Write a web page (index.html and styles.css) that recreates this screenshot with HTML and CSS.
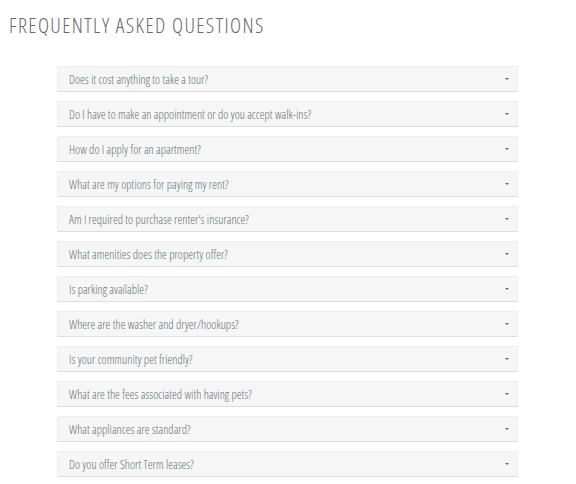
FILE: index.html
```html
<!doctype html>
<html lang="en">
<head>
    <meta charset="UTF-8">
    <title>FAQ</title>
    <link rel="stylesheet" href="styles.css">
</head>
<body>
    <h1 class="faq-title">FREQUENTLY ASKED QUESTIONS</h1>
    <div class="faq-list">
      <div class="faq-item"><span>Does it cost anything to take a tour?</span><i class="caret"></i></div>
      <div class="faq-item"><span>Do I have to make an appointment or do you accept walk-ins?</span><i class="caret"></i></div>
      <div class="faq-item"><span>How do I apply for an apartment?</span><i class="caret"></i></div>
      <div class="faq-item"><span>What are my options for paying my rent?</span><i class="caret"></i></div>
      <div class="faq-item"><span>Am I required to purchase renter's insurance?</span><i class="caret"></i></div>
      <div class="faq-item"><span>What amenities does the property offer?</span><i class="caret"></i></div>
      <div class="faq-item"><span>Is parking available?</span><i class="caret"></i></div>
      <div class="faq-item"><span>Where are the washer and dryer/hookups?</span><i class="caret"></i></div>
      <div class="faq-item"><span>Is your community pet friendly?</span><i class="caret"></i></div>
      <div class="faq-item"><span>What are the fees associated with having pets?</span><i class="caret"></i></div>
      <div class="faq-item"><span>What appliances are standard?</span><i class="caret"></i></div>
      <div class="faq-item"><span>Do you offer Short Term leases?</span><i class="caret"></i></div>
    </div>
</body>
</html>
```

FILE: styles.css
```css
body {
  margin: 0;
  background: #fff;
  font-family: "Open Sans", "Liberation Sans", sans-serif;
  font-stretch: condensed;
  font-weight: 300;
}
.faq-title {
  margin: 0;
  padding: 12px 0 0 9px;
  font-size: 21px;
  font-weight: 300;
  line-height: 26px;
  color: #6a6a6a;
  letter-spacing: 1.4px;
}
.faq-list {
  display: flex;
  flex-direction: column;
  gap: 9px;
  margin: 28px 0 0 57px;
  width: 461px;
}
.faq-item {
  display: flex;
  align-items: center;
  justify-content: space-between;
  height: 24px;
  padding: 0 11px;
  background: #f6f6f6;
  border: 1px solid #eeeeee;
  border-bottom-color: #dddddd;
  font-size: 12px;
  letter-spacing: 0.05px;
  color: #587373;
}
.caret {
  width: 0;
  height: 0;
  margin-right: -3px;
  border-left: 2px solid transparent;
  border-right: 2px solid transparent;
  border-top: 2px solid #666;
}
```
